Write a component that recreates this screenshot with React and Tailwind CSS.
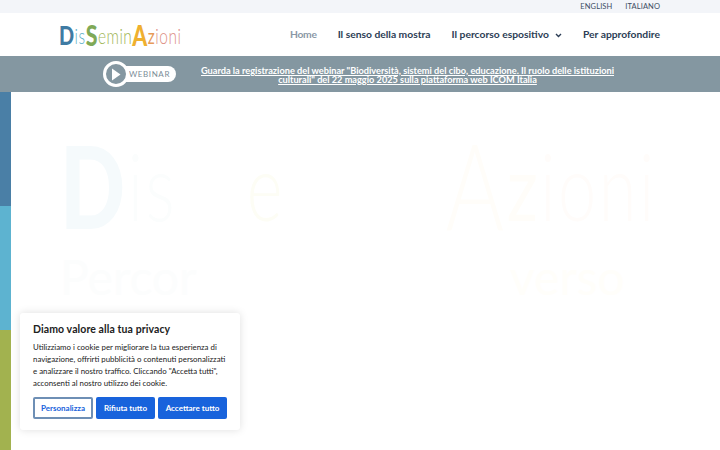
import React from "react";

function Logo() {
  return (
    <div className="-ml-[1px] flex items-end h-[24px] w-[122px] whitespace-nowrap leading-none font-['Lato',sans-serif] tracking-[0.7px] scale-x-[0.735] origin-left">
      <span className="text-[27px] font-black text-[#3f7ba3] leading-[24px]">D</span>
      <span className="text-[21px] font-light text-[#5fb2c9] leading-[22px]">is</span>
      <span className="text-[29px] font-black text-[#7fa957] leading-[25px]">S</span>
      <span className="text-[21px] font-light text-[#9fb657] leading-[22px]">emin</span>
      <span className="text-[29px] font-black text-[#efb02f] leading-[25px]">A</span>
      <span className="text-[21px] font-normal text-[#e79a58] leading-[22px]">z</span>
      <span className="text-[21px] font-light text-[#dd8f86] leading-[22px]">ioni</span>
    </div>
  );
}

function Nav({ children, active }) {
  return (
    <span className={`text-[10.3px] font-bold whitespace-nowrap ${active ? "text-[#8a98a6] tracking-[-0.3px]" : "text-[#2c3d55]"}`}>
      {children}
    </span>
  );
}

export default function App() {
  return (
    <div className="relative w-[720px] h-[450px] overflow-hidden bg-white font-['Lato',sans-serif]">
      <div className="h-[13px] bg-[#f3f5f9] flex justify-end items-center gap-[13px] pr-[60px] text-[7.5px] tracking-[0.1px] text-[#3c4d63]">
        <span>ENGLISH</span>
        <span>ITALIANO</span>
      </div>

      <header className="h-[43px] flex items-center justify-between pl-[60px] pr-[60px] pt-[1px] bg-white">
        <Logo />
        <nav className="flex items-center gap-[21px]">
          <Nav active>Home</Nav>
          <Nav>Il senso della mostra</Nav>
          <span className="flex items-center gap-[6px]">
            <Nav>Il percorso espositivo</Nav>
            <svg width="7" height="5" viewBox="0 0 7 5" fill="none" stroke="#2c3d55" strokeWidth="1.4"><path d="M1 1l2.5 2.5L6 1" /></svg>
          </span>
          <Nav>Per approfondire</Nav>
        </nav>
      </header>

      <div className="h-[36px] bg-[#8497a1] flex items-center">
        <div className="ml-[103px] w-[73px] relative h-[26px] flex items-center shrink-0">
          <div className="absolute left-[3px] right-0 h-[16px] rounded-full bg-white flex items-center justify-end pr-[6px]">
            <span className="text-[8px] font-normal tracking-[0.6px] text-[#7a8d97]">WEBINAR</span>
          </div>
          <div className="relative w-[26px] h-[26px] rounded-full border-[3px] border-white bg-[#8497a1] flex items-center justify-center">
            <svg width="10" height="13" viewBox="0 0 10 13"><path d="M1 0.5L9.5 6.5L1 12.5Z" fill="#fff" /></svg>
          </div>
        </div>
        <a className="ml-[24px] pt-[1px] w-[415px] text-center text-[9.2px] leading-[9px] font-bold text-white underline shrink-0 whitespace-nowrap">
          Guarda la registrazione del webinar "Biodiversità, sistemi del cibo, educazione. Il ruolo delle istituzioni<br />
          culturali" del 22 maggio 2025 sulla piattaforma web ICOM Italia
        </a>
      </div>

      <main className="flex h-[358px]">
        <div className="w-[11px] flex flex-col shrink-0">
          <div className="h-[114px] bg-[#4a7fa6]" />
          <div className="h-[124px] bg-[#5db3d0]" />
          <div className="flex-1 bg-[#a2b24f]" />
        </div>
        <div className="flex-1 pl-[49px] pt-[40px]">
          <div className="flex items-end h-[104px] whitespace-nowrap scale-x-[0.745] origin-left tracking-[3.4px]">
            <span className="text-[115px] leading-[104px] font-black text-[#f5fafc]">D</span>
            <span className="text-[92px] leading-[100px] font-light text-[#fbfdfd]">is</span>
            <span className="text-[120px] leading-[104px] font-black text-white">S</span>
            <span className="ml-[24px] text-[92px] leading-[100px] font-light text-[#fdfdf5]">e</span>
            <span className="text-[92px] leading-[100px] font-light text-white">min</span>
            <span className="ml-[60px] text-[120px] leading-[104px] font-light text-[#fffdf9]">A</span>
            <span className="text-[92px] leading-[100px] font-normal text-[#fffdf9]">z</span>
            <span className="text-[92px] leading-[100px] font-light text-[#fffcfa]">ioni</span>
          </div>
          <div className="mt-[17px] flex text-[48px] leading-[48px]">
            <span className="w-[450px] font-normal text-[#fcfdfd]">Percor</span>
            <span className="font-normal text-[#fffefa]">verso</span>
          </div>
        </div>
      </main>

      <div className="absolute left-[20px] top-[313px] w-[220px] h-[117px] bg-white rounded-[3px] shadow-[0_0_8px_rgba(0,0,0,0.13)] px-[13px] pt-[10px]">
        <h2 className="text-[10.5px] leading-[13px] font-bold tracking-[0.1px] text-[#212121]">Diamo valore alla tua privacy</h2>
        <p className="mt-[5px] text-[7.85px] leading-[12px] text-[#212121] whitespace-nowrap">
          Utilizziamo i cookie per migliorare la tua esperienza di<br />
          navigazione, offrirti pubblicità o contenuti personalizzati<br />
          e analizzare il nostro traffico. Cliccando "Accetta tutti",<br />
          acconsenti al nostro utilizzo dei cookie.
        </p>
        <div className="mt-[8px] flex gap-[3px] text-[8px] font-bold">
          <button className="w-[60px] h-[22px] border-2 border-[#6e8fb5] rounded-[2px] text-[#1863dc] bg-white">Personalizza</button>
          <button className="w-[59px] h-[22px] rounded-[2px] text-white bg-[#1863dc]">Rifiuta tutto</button>
          <button className="w-[69px] h-[22px] rounded-[2px] text-white bg-[#1863dc]">Accettare tutto</button>
        </div>
      </div>
    </div>
  );
}
